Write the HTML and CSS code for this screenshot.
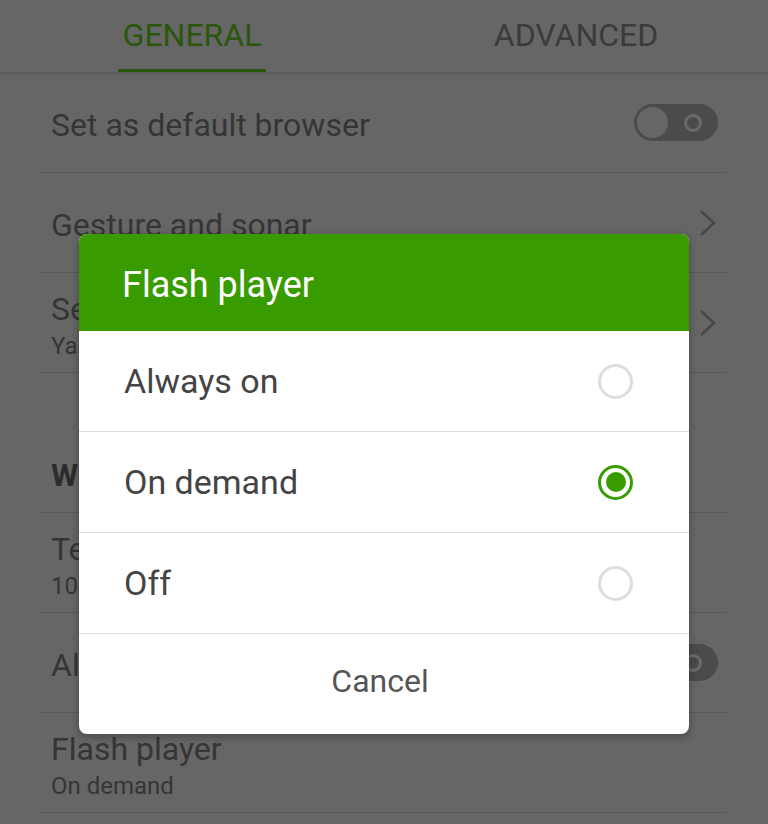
FILE: index.html
```html
<!DOCTYPE html>
<html>
<head>
  <title>Settings</title>
  <meta name="viewport" content="width=device-width, initial-scale=1">
  <link rel="stylesheet" href="styles.css">
</head>
<body>
  <div class="tabs">
    <div class="tab active"><span>GENERAL</span></div>
    <div class="tab"><span>ADVANCED</span></div>
  </div>

  <div class="list">
    <div class="row">
      <div class="title">Set as default browser</div>
      <div class="toggle"><span class="knob"></span><span class="ring"></span></div>
    </div>
    <div class="row">
      <div class="title">Gesture and sonar</div>
      <svg class="chevron" width="20" height="30" viewBox="0 0 20 30"><polyline points="3,3 16,15 3,27" /></svg>
    </div>
    <div class="row">
      <div>
        <div class="title">Search engine</div>
        <div class="sub">Yahoo</div>
      </div>
      <svg class="chevron" width="20" height="30" viewBox="0 0 20 30"><polyline points="3,3 16,15 3,27" /></svg>
    </div>
    <div class="row section">
      <div class="heading">Web content</div>
    </div>
    <div class="row">
      <div>
        <div class="title">Text size</div>
        <div class="sub">100%</div>
      </div>
    </div>
    <div class="row">
      <div class="title">Always request desktop site</div>
      <div class="toggle"><span class="knob"></span><span class="ring"></span></div>
    </div>
    <div class="row">
      <div>
        <div class="title">Flash player</div>
        <div class="sub">On demand</div>
      </div>
    </div>
  </div>

  <div class="dialog">
    <div class="dialog-title">Flash player</div>
    <div class="option">
      <span>Always on</span>
      <span class="radio"></span>
    </div>
    <div class="option">
      <span>On demand</span>
      <span class="radio checked"></span>
    </div>
    <div class="option">
      <span>Off</span>
      <span class="radio"></span>
    </div>
    <div class="cancel">Cancel</div>
  </div>
</body>
</html>
```

FILE: styles.css
```css
body {
  margin: 0;
  height: 824px;
  overflow: hidden;
  font-family: Roboto, "Liberation Sans", sans-serif;
  background-color: #666;
  color: #353535;
}
.tabs {
  display: flex;
  height: 72px;
  border-bottom: 1px solid #5b5b5b;
  box-shadow: 0 1px 3px rgba(0, 0, 0, 0.15);
}
.tab {
  flex: 1;
  display: flex;
  justify-content: center;
}
.tab span {
  display: flex;
  align-items: center;
  padding: 0 5px;
  font-size: 32px;
  color: #3b3b3b;
  border-bottom: 3px solid transparent;
}
.tab.active span {
  color: #2a570c;
  border-bottom-color: #2a570c;
}
.list {
  padding: 0 41px 0 40px;
}
.row {
  height: 95px;
  display: flex;
  align-items: center;
  justify-content: space-between;
  border-bottom: 1px solid #5a5a5a;
  padding: 4px 9px 0 11px;
}
.row .title {
  font-size: 32px;
  line-height: 38px;
}
.row .sub {
  font-size: 24px;
  line-height: 28px;
  margin-top: 4px;
}
.row.section {
  height: 135px;
  align-items: flex-end;
}
.heading {
  font-size: 31px;
  font-weight: bold;
  line-height: 32px;
  padding-bottom: 20px;
  color: #2c2c2c;
}
.toggle {
  width: 84px;
  height: 37px;
  border-radius: 19px;
  background-color: #4b4b4b;
  display: flex;
  align-items: center;
  justify-content: space-between;
  padding: 0 16px 0 3px;
  box-sizing: border-box;
  margin-top: -4px;
}
.toggle .knob {
  width: 31px;
  height: 31px;
  border-radius: 50%;
  background-color: #666;
}
.toggle .ring {
  width: 18px;
  height: 18px;
  border-radius: 50%;
  border: 3px solid #6a6a6a;
  box-sizing: border-box;
}
.chevron {
  margin-top: -4px;
}
.chevron polyline {
  fill: none;
  stroke: #474747;
  stroke-width: 2.5;
}
.dialog {
  position: absolute;
  top: 234px;
  left: 79px;
  width: 610px;
  background-color: #fff;
  border-radius: 8px;
  overflow: hidden;
  box-shadow: 0 3px 8px rgba(0, 0, 0, 0.3);
}
.dialog-title {
  height: 93px;
  display: flex;
  align-items: center;
  padding: 4px 0 0 43px;
  background-color: #389c00;
  color: #fff;
  font-size: 36px;
}
.option {
  height: 100px;
  display: flex;
  align-items: center;
  justify-content: space-between;
  padding: 0 56px 0 45px;
  border-bottom: 1px solid #ddd;
  font-size: 34px;
  color: #444;
}
.radio {
  width: 35px;
  height: 35px;
  border-radius: 50%;
  border: 3px solid #ddd;
  box-sizing: border-box;
  display: flex;
  align-items: center;
  justify-content: center;
}
.radio.checked {
  border-color: #389c00;
}
.radio.checked::after {
  content: "";
  width: 20px;
  height: 20px;
  border-radius: 50%;
  background-color: #389c00;
}
.cancel {
  height: 94px;
  display: flex;
  align-items: center;
  justify-content: center;
  padding: 0 8px 6px 0;
  font-size: 32px;
  color: #555;
}
```
